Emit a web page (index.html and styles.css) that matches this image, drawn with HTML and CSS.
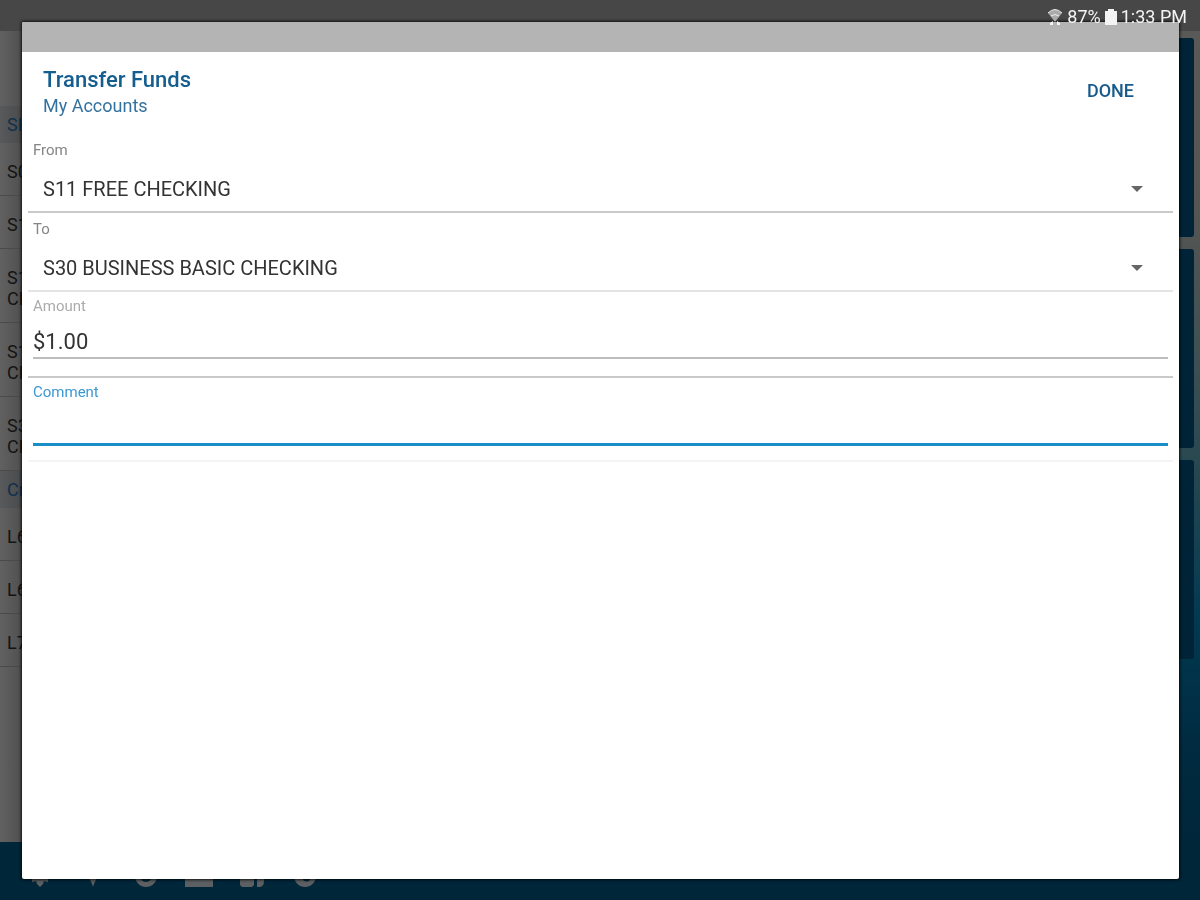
FILE: index.html
```html
<!DOCTYPE html>
<html lang="en">
<head>
<meta charset="utf-8">
<meta name="viewport" content="width=device-width, initial-scale=1">
<title>Transfer Funds</title>
<link rel="stylesheet" href="styles.css">
</head>
<body>
<div class="app">
  <div class="app-bar"></div>
  <main class="content">
    <aside class="accounts">
      <div class="accounts-top"></div>
      <h2 class="group">SH</h2>
      <ul class="list">
        <li>S0</li>
        <li>S1</li>
        <li>S1<br>CH</li>
        <li>S1<br>CH</li>
        <li>S3<br>CH</li>
      </ul>
      <h2 class="group">Cr</h2>
      <ul class="list">
        <li>L6</li>
        <li>L6</li>
        <li>L7</li>
      </ul>
    </aside>
    <section class="cards">
      <div class="card"></div>
      <div class="card"></div>
      <div class="card"></div>
    </section>
  </main>
  <footer class="toolbar">
    <svg viewBox="0 0 28 28"><path d="M14 2l2 4 4-2 1 4 4 1-2 4 3 3-4 2 0 4-4-1-1 3-3 3-3-3-1-3-4 1 0-4-4-2 3-3-2-4 4-1 1-4 4 2z"/></svg>
    <svg viewBox="0 0 28 28"><path d="M14 27C12 19 7 16 7 10a7 7 0 0 1 14 0c0 6-5 9-7 17z"/></svg>
    <svg viewBox="0 0 28 28"><path fill-rule="evenodd" d="M14 5a11 11 0 1 0 0 22 11 11 0 0 0 0-22zm0 5a6 6 0 1 1 0 12 6 6 0 0 1 0-12z"/></svg>
    <svg viewBox="0 0 28 28"><path d="M0 5h28v22H0z"/></svg>
    <svg viewBox="0 0 28 28"><path d="M2 7h14v18l-2 2H4l-2-2zM19 7h7v14q0 6-5 6h-2z"/></svg>
    <svg viewBox="0 0 28 28"><path fill-rule="evenodd" d="M14 5a11 11 0 1 0 0 22 11 11 0 0 0 0-22zm-2 5h7v10q-3 3-7 0z"/></svg>
  </footer>
</div>

<div class="dialog" role="dialog" aria-labelledby="dialog-title">
  <div class="dialog-strip"></div>
  <header class="dialog-head">
    <div>
      <h1 class="title" id="dialog-title">Transfer Funds</h1>
      <p class="subtitle">My Accounts</p>
    </div>
    <button class="done" type="button">DONE</button>
  </header>
  <form class="form">
    <div class="field">
      <label class="label" for="from">From</label>
      <div class="select-wrap">
        <select class="select" id="from"><option>S11 FREE CHECKING</option></select>
        <svg class="caret" viewBox="0 0 12 6"><path d="M0 0h12L6 6z"/></svg>
      </div>
    </div>
    <div class="field field-light">
      <label class="label" for="to">To</label>
      <div class="select-wrap">
        <select class="select" id="to"><option>S30 BUSINESS BASIC CHECKING</option></select>
        <svg class="caret" viewBox="0 0 12 6"><path d="M0 0h12L6 6z"/></svg>
      </div>
    </div>
    <div class="field field-text">
      <label class="label label-muted" for="amount">Amount</label>
      <input class="input" id="amount" type="text" value="$1.00">
    </div>
    <div class="field field-text field-faint">
      <label class="label label-active" for="comment">Comment</label>
      <input class="input input-active" id="comment" type="text">
    </div>
  </form>
</div>

<div class="status">
  <svg class="wifi" viewBox="0 0 16 16"><path class="wifi-fan" d="M1 4Q8-3 15 4L8 13z"/><path class="wifi-arc" d="M1 4Q8-3 15 4M4 7q4-3 8 0"/><path class="wifi-dots" d="M3 14l3-2v4H3zM13 14l-3-2v4h3z"/></svg>
  <span>87%</span>
  <svg class="battery" viewBox="0 0 12 16"><path d="M3 0h6v2h3v14H0V2h3z"/></svg>
  <span class="time">1:33 PM</span>
</div>
</body>
</html>
```
FILE: styles.css
```css
* { box-sizing: border-box; }
body {
  margin: 0;
  font-family: Roboto, "Liberation Sans", sans-serif;
  color: #333;
}
h1, h2, p, ul { margin: 0; padding: 0; font-weight: 400; }

.app { display: flex; flex-direction: column; height: 100vh; overflow: hidden; }
.app-bar { flex: none; height: 31px; background: #474747; }
.content {
  flex: 1;
  min-height: 0;
  display: flex;
  background: linear-gradient(#595957 0, #555653 22%, #3c4f53 42%, #244650 56%, #013a52 72%, #002b40 88%, #00263a 100%);
}
.accounts { width: 24%; background: linear-gradient(to right, #616161, #505050 22px); }
.accounts-top { height: 75px; }
.group {
  height: 37px;
  padding: 1px 7px 0;
  background: linear-gradient(to right, #585a5b, #484a4b 22px);
  font-size: 18px;
  line-height: 36px;
  color: #10304c;
}
.list { list-style: none; font-size: 18px; line-height: 21px; color: #141414; }
.list li { padding: 18px 7px 13px; border-bottom: 1px solid #4a4a4a; }
.cards { flex: 1; display: flex; flex-direction: column; gap: 12px; padding: 7px 6px 0; }
.card { flex: none; height: 199px; border-radius: 3px; background: #002337; }
.toolbar {
  flex: none;
  display: flex;
  gap: 25px;
  height: 58px;
  padding: 18px 26px 0;
  background: #00263a;
}
.toolbar svg { width: 28px; height: 28px; fill: #5d6062; }

.dialog {
  position: fixed;
  inset: 22px 21px 21px 22px;
  background: #fff;
  border-radius: 2px;
  overflow: hidden;
  box-shadow: 0 0 3px 1px rgba(0, 0, 0, .8);
}
.dialog-strip { height: 30px; background: #b4b4b4; }
.dialog-head {
  display: flex;
  justify-content: space-between;
  align-items: flex-start;
  height: 82px;
  padding: 15px 37px 0 21px;
}
.title { font-size: 22px; line-height: 26px; font-weight: 500; color: #135d8f; }
.subtitle { font-size: 18px; line-height: 26px; color: #33729f; }
.done {
  margin-top: 8px;
  padding: 4px 8px;
  border: 0;
  background: none;
  font: 500 18px/24px Roboto, sans-serif;
  color: #175a8c;
}
.form { padding: 0 6px; }
.field { padding: 6px 5px 0; border-bottom: 2px solid #c9c9c9; }
.field-light { border-color: #e4e4e4; }
.field-text { padding: 4px 5px 17px; }
.field-faint { padding-bottom: 14px; border-bottom: 2px solid #f4f4f4; }
.label { display: block; font-size: 15px; line-height: 20px; color: #858585; }
.label-muted { color: #ababab; }
.label-active { color: #3c98d2; }
.select-wrap { position: relative; }
.select {
  display: block;
  width: 100%;
  height: 51px;
  padding: 7px 40px 0 10px;
  border: 0;
  background: none;
  appearance: none;
  font: 20px Roboto, sans-serif;
  color: #333;
}
.caret { position: absolute; right: 25px; top: 26px; width: 12px; height: 6px; fill: #666; pointer-events: none; }
.input {
  display: block;
  width: 100%;
  height: 43px;
  padding: 9px 0 0;
  border: 0;
  border-bottom: 2px solid #bdbdbd;
  border-radius: 0;
  background: none;
  outline: 0;
  font: 22px Roboto, sans-serif;
  color: #333;
}
.input-active { height: 44px; border-bottom: 3px solid #1a8ec9; }

.status {
  position: fixed;
  top: 6px;
  right: 13px;
  display: flex;
  align-items: center;
  gap: 4px;
  font-size: 18px;
  line-height: 22px;
  color: #f4f4f4;
}
.wifi { width: 16px; height: 16px; }
.wifi-fan { fill: #aaa; }
.wifi-arc { fill: none; stroke: #eee; stroke-width: 1; }
.wifi-dots { fill: #f4f4f4; }
.battery { width: 12px; height: 16px; fill: #f4f4f4; }
```
